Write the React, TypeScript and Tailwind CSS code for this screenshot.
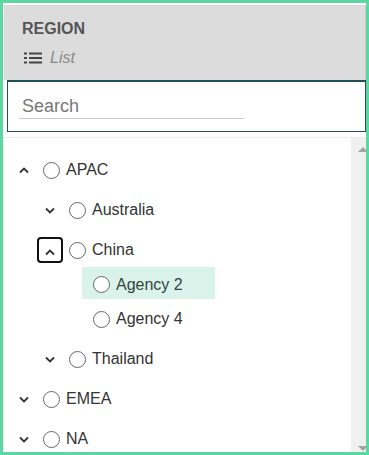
import React from "react";

type Node = {
  label: string;
  level: 0 | 1 | 2;
  open?: boolean;
  focused?: boolean;
  selected?: boolean;
};

const rows: Node[] = [
  { label: "APAC", level: 0, open: true },
  { label: "Australia", level: 1 },
  { label: "China", level: 1, open: true, focused: true },
  { label: "Agency 2", level: 2, selected: true },
  { label: "Agency 4", level: 2 },
  { label: "Thailand", level: 1 },
  { label: "EMEA", level: 0 },
  { label: "NA", level: 0 },
];

function Chevron({ up }: { up?: boolean }) {
  return (
    <svg width="10" height="7" viewBox="0 0 10 7" fill="none">
      <path
        d={up ? "M1 5.5 L5 1.5 L9 5.5" : "M1 1.5 L5 5.5 L9 1.5"}
        stroke="#333"
        strokeWidth="1.8"
      />
    </svg>
  );
}

function Radio() {
  return <span className="w-[17px] h-[17px] rounded-full border border-[#666] bg-white shrink-0" />;
}

function Row({ node }: { node: Node }) {
  if (node.level === 2) {
    return (
      <div className={node.selected ? "h-[32px] -mt-[3px] flex" : "h-10 flex"}>
        <div
          className={
            node.selected
              ? "ml-[78px] w-[133px] pl-[11px] pt-[3px] flex items-center gap-[6px] bg-[#d9f3ea] text-[#33443e]"
              : "ml-[78px] w-[133px] pl-[11px] flex items-center gap-[6px] text-[#333]"
          }
        >
          <Radio />
          <span>{node.label}</span>
        </div>
      </div>
    );
  }
  return (
    <div className={node.level === 0 ? "h-10 flex items-center pl-[7px]" : "h-10 flex items-center pl-[33px]"}>
      <span className="w-[26px] h-[26px] flex items-center justify-center shrink-0">
        {node.focused ? (
          <span className="w-[26px] h-[26px] rounded-[4px] border-2 border-[#111] flex items-end justify-center pb-[5px]">
            <Chevron up />
          </span>
        ) : (
          <Chevron up={node.open} />
        )}
      </span>
      <span className="ml-[6px] flex items-center">
        <Radio />
      </span>
      <span className="ml-[6px] text-[#333]">{node.label}</span>
    </div>
  );
}

export default function App() {
  return (
    <div
      className="w-[369px] h-[455px] border-[3px] border-[#5ed6a1] bg-white flex flex-col overflow-hidden"
      style={{ fontFamily: '"Liberation Sans", Arial, sans-serif' }}
    >
      {/* Header */}
      <div className="mt-[2px] ml-px h-[75px] bg-[#dcdcdc] border-r border-[#c9c9c9] pl-[18px] pt-[14px]">
        <div className="text-[16px] font-bold text-[#555] leading-5">REGION</div>
        <div className="mt-[9px] flex items-center gap-[8px] text-[#8a8a8a]">
          <svg width="18" height="12" viewBox="0 0 18 12" className="ml-[2px]">
            <rect x="0" y="0.5" width="3" height="2" fill="#444" />
            <rect x="0" y="5" width="3" height="2" fill="#444" />
            <rect x="0" y="9.5" width="3" height="2" fill="#444" />
            <rect x="5" y="0.5" width="13" height="2" fill="#444" />
            <rect x="5" y="5" width="13" height="2" fill="#444" />
            <rect x="5" y="9.5" width="13" height="2" fill="#444" />
          </svg>
          <span className="italic text-[16px] leading-5">List</span>
        </div>
      </div>

      {/* Search */}
      <div className="ml-[4px] h-[52px] border border-t-2 border-[#1f4f57] px-[11px] pt-[13px]">
        <div className="w-[225px] border-b border-[#c8c8c8] pb-[1px] pl-[3px] text-[18px] text-[#777] leading-[22px]">
          Search
        </div>
      </div>

      {/* Tree */}
      <div className="mt-[5px] flex-1 flex border-t border-l border-[#ececec] min-h-0">
        <div className="flex-1 pt-[12px] text-[16px]">
          {rows.map((n) => (
            <Row key={n.label} node={n} />
          ))}
        </div>
        <div className="w-[15px] bg-[#f0f0f0] flex flex-col justify-between items-end pt-[9px] pb-[1px]">
          <span className="w-0 h-0 border-x-[5px] border-x-transparent border-b-[5px] border-b-[#a3a3a3] -mr-[2px]" />
          <span className="w-0 h-0 border-x-[5px] border-x-transparent border-t-[5px] border-t-[#a3a3a3] -mr-[2px]" />
        </div>
      </div>
    </div>
  );
}
